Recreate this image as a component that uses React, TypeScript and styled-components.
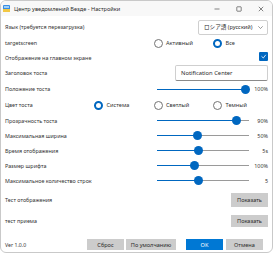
import React from 'react'
import styled, { createGlobalStyle } from 'styled-components'

const GlobalStyle = createGlobalStyle`
  html, body {
    margin: 0;
    padding: 0;
    background: #ffffff;
  }
  body {
    font-family: 'Noto Sans', 'Open Sans', sans-serif;
    color: #2b2b2b;
  }
`

const Window = styled.div`
  width: 273px;
  height: 253px;
  box-sizing: border-box;
  border: 1px solid #c9c9c9;
  border-radius: 6px;
  overflow: hidden;
  background: #ffffff;
  display: flex;
  flex-direction: column;
`

const TitleBar = styled.div`
  height: 15px;
  flex: 0 0 15px;
  display: flex;
  align-items: center;
  padding-left: 2px;
  background: #f8f8f8;
`

const AppIcon = styled.svg`
  width: 7px;
  height: 7px;
  margin-right: 4px;
`

const TitleText = styled.span`
  font-size: 5.6px;
  flex: 1;
  color: #2b2b2b;
`

const Caption = styled.div`
  display: flex;
  height: 100%;
`

const CaptionButton = styled.div`
  width: 22px;
  display: flex;
  align-items: center;
  justify-content: center;
`

const Content = styled.div`
  flex: 1;
  display: flex;
  flex-direction: column;
  padding: 3px 4px 0 4px;
`

const Row = styled.div<{ $h: number }>`
  height: ${p => p.$h}px;
  flex: 0 0 ${p => p.$h}px;
  display: flex;
  align-items: center;
  justify-content: space-between;
`

const Label = styled.span`
  font-size: 5.4px;
  white-space: nowrap;
  color: #333;
`

const Combo = styled.div`
  width: 70px;
  height: 15px;
  box-sizing: border-box;
  border: 1px solid #cfcfcf;
  border-radius: 2px;
  display: flex;
  align-items: center;
  justify-content: space-between;
  padding: 0 4px 0 5px;
  font-size: 5.6px;
  font-family: 'Noto Sans', 'Noto Sans CJK JP', sans-serif;
`

const RadioGroup = styled.div`
  display: flex;
  margin-right: -5px;
`

const RadioOption = styled.div`
  width: 59.5px;
  display: flex;
  align-items: center;
  font-size: 5.6px;
  color: #333;
`

const RadioDot = styled.span<{ $on?: boolean }>`
  width: 9px;
  height: 9px;
  box-sizing: border-box;
  border-radius: 50%;
  margin-right: 3.5px;
  margin-left: -0.5px;
  border: ${p => (p.$on ? '2.8px solid #0067c0' : '0.8px solid #737373')};
  background: #fff;
`

const CheckBox = styled.div`
  width: 9px;
  height: 9px;
  background: #0067c0;
  border-radius: 1px;
  display: flex;
  align-items: center;
  justify-content: center;
  margin-top: -3px;
`

const TextBox = styled.div`
  width: 93px;
  height: 16px;
  box-sizing: border-box;
  border: 1px solid #cfcfcf;
  border-bottom-color: #8a8a8a;
  border-radius: 2px;
  display: flex;
  align-items: center;
  padding-left: 5px;
  font-size: 5.8px;
`

const SliderBox = styled.div`
  display: flex;
  align-items: center;
  width: 111px;
`

const Track = styled.div`
  position: relative;
  width: 92px;
  height: 1px;
  background: #9a9a9a;
`

const Fill = styled.div`
  position: absolute;
  left: 0;
  top: 0;
  height: 1px;
  background: #0067c0;
`

const Thumb = styled.div`
  position: absolute;
  top: -4px;
  width: 9px;
  height: 9px;
  margin-left: -4.5px;
  border-radius: 50%;
  background: #0067c0;
`

const Value = styled.span`
  flex: 1;
  text-align: right;
  font-size: 5.4px;
  color: #333;
`

const Button = styled.div<{ $w: number; $h?: number; $primary?: boolean }>`
  width: ${p => p.$w}px;
  height: ${p => p.$h ?? 11}px;
  display: flex;
  align-items: center;
  justify-content: center;
  font-size: 5.6px;
  background: ${p => (p.$primary ? '#0078d4' : '#cccccc')};
  color: ${p => (p.$primary ? '#ffffff' : '#2b2b2b')};
`

const Footer = styled.div`
  display: flex;
  align-items: center;
  height: 11px;
  margin-top: 9px;
  padding-right: 5px;
`

const Version = styled.span`
  font-size: 5.2px;
  flex: 1;
  color: #333;
`

const ButtonGap = styled.div<{ $w: number }>`
  width: ${p => p.$w}px;
`

const Slider: React.FC<{ pos: number; value: string }> = ({ pos, value }) => {
  const center = 4 + pos * 84
  return (
    <SliderBox>
      <Track>
        <Fill style={{ width: center }} />
        <Thumb style={{ left: center }} />
      </Track>
      <Value>{value}</Value>
    </SliderBox>
  )
}

const sliders = [
  { label: 'Прозрачность тоста', pos: 0.9, value: '90%' },
  { label: 'Максимальная ширина', pos: 0.43, value: '50%' },
  { label: 'Время отображения', pos: 0.45, value: '5s' },
  { label: 'Размер шрифта', pos: 0.4, value: '100%' },
  { label: 'Максимальное количество строк', pos: 0.45, value: '5' },
]

const App: React.FC = () => {
  return (
    <>
      <GlobalStyle />
      <Window>
        <TitleBar>
          <AppIcon viewBox="0 0 7 7">
            <rect x="0" y="0" width="7" height="7" rx="1" fill="#3a8ee6" />
            <rect x="0" y="4" width="7" height="3" fill="#f2c744" />
            <rect x="1" y="1" width="5" height="2" fill="#9fd0f7" />
          </AppIcon>
          <TitleText>Центр уведомлений Везде - Настройки</TitleText>
          <Caption>
            <CaptionButton>
              <svg width="6" height="6" viewBox="0 0 6 6">
                <line x1="0.5" y1="3" x2="5.5" y2="3" stroke="#333" strokeWidth="0.6" />
              </svg>
            </CaptionButton>
            <CaptionButton>
              <svg width="6" height="6" viewBox="0 0 6 6">
                <rect x="0.8" y="0.8" width="4.4" height="4.4" rx="0.6" fill="none" stroke="#333" strokeWidth="0.6" />
              </svg>
            </CaptionButton>
            <CaptionButton>
              <svg width="6" height="6" viewBox="0 0 6 6">
                <path d="M0.8 0.8 L5.2 5.2 M5.2 0.8 L0.8 5.2" stroke="#333" strokeWidth="0.6" />
              </svg>
            </CaptionButton>
          </Caption>
        </TitleBar>
        <Content>
          <Row $h={16}>
            <Label>Язык (требуется перезагрузка)</Label>
            <Combo>
              <span>ロシア語 (русский)</span>
              <svg width="5" height="3" viewBox="0 0 5 3">
                <path d="M0.3 0.3 L2.5 2.5 L4.7 0.3" fill="none" stroke="#555" strokeWidth="0.6" />
              </svg>
            </Combo>
          </Row>
          <Row $h={16}>
            <Label>targetscreen</Label>
            <RadioGroup>
              <RadioOption>
                <RadioDot />
                Активный
              </RadioOption>
              <RadioOption>
                <RadioDot $on />
                Все
              </RadioOption>
            </RadioGroup>
          </Row>
          <Row $h={14}>
            <Label>Отображение на главном экране</Label>
            <CheckBox>
              <svg width="7" height="7" viewBox="0 0 7 7">
                <path d="M1.5 3.3 L3.3 5 L5.8 1.8" fill="none" stroke="#fff" strokeWidth="0.8" />
              </svg>
            </CheckBox>
          </Row>
          <Row $h={16}>
            <Label>Заголовок тоста</Label>
            <TextBox>Notification Center</TextBox>
          </Row>
          <Row $h={16}>
            <Label>Положение тоста</Label>
            <Slider pos={1} value="100%" />
          </Row>
          <Row $h={16}>
            <Label>Цвет тоста</Label>
            <RadioGroup>
              <RadioOption>
                <RadioDot $on />
                Система
              </RadioOption>
              <RadioOption>
                <RadioDot />
                Светлый
              </RadioOption>
              <RadioOption>
                <RadioDot />
                Темный
              </RadioOption>
            </RadioGroup>
          </Row>
          {sliders.map(s => (
            <Row $h={15} key={s.label}>
              <Label>{s.label}</Label>
              <Slider pos={s.pos} value={s.value} />
            </Row>
          ))}
          <Row $h={24}>
            <Label>Тест отображения</Label>
            <Button $w={37} $h={14}>Показать</Button>
          </Row>
          <Row $h={18}>
            <Label>тест приема</Label>
            <Button $w={37} $h={12}>Показать</Button>
          </Row>
          <Footer>
            <Version>Ver 1.0.0</Version>
            <Button $w={37}>Сброс</Button>
            <ButtonGap $w={2} />
            <Button $w={50}>По умолчанию</Button>
            <ButtonGap $w={10} />
            <Button $w={37} $primary>OK</Button>
            <ButtonGap $w={3} />
            <Button $w={37}>Отмена</Button>
          </Footer>
        </Content>
      </Window>
    </>
  )
}

export default App
